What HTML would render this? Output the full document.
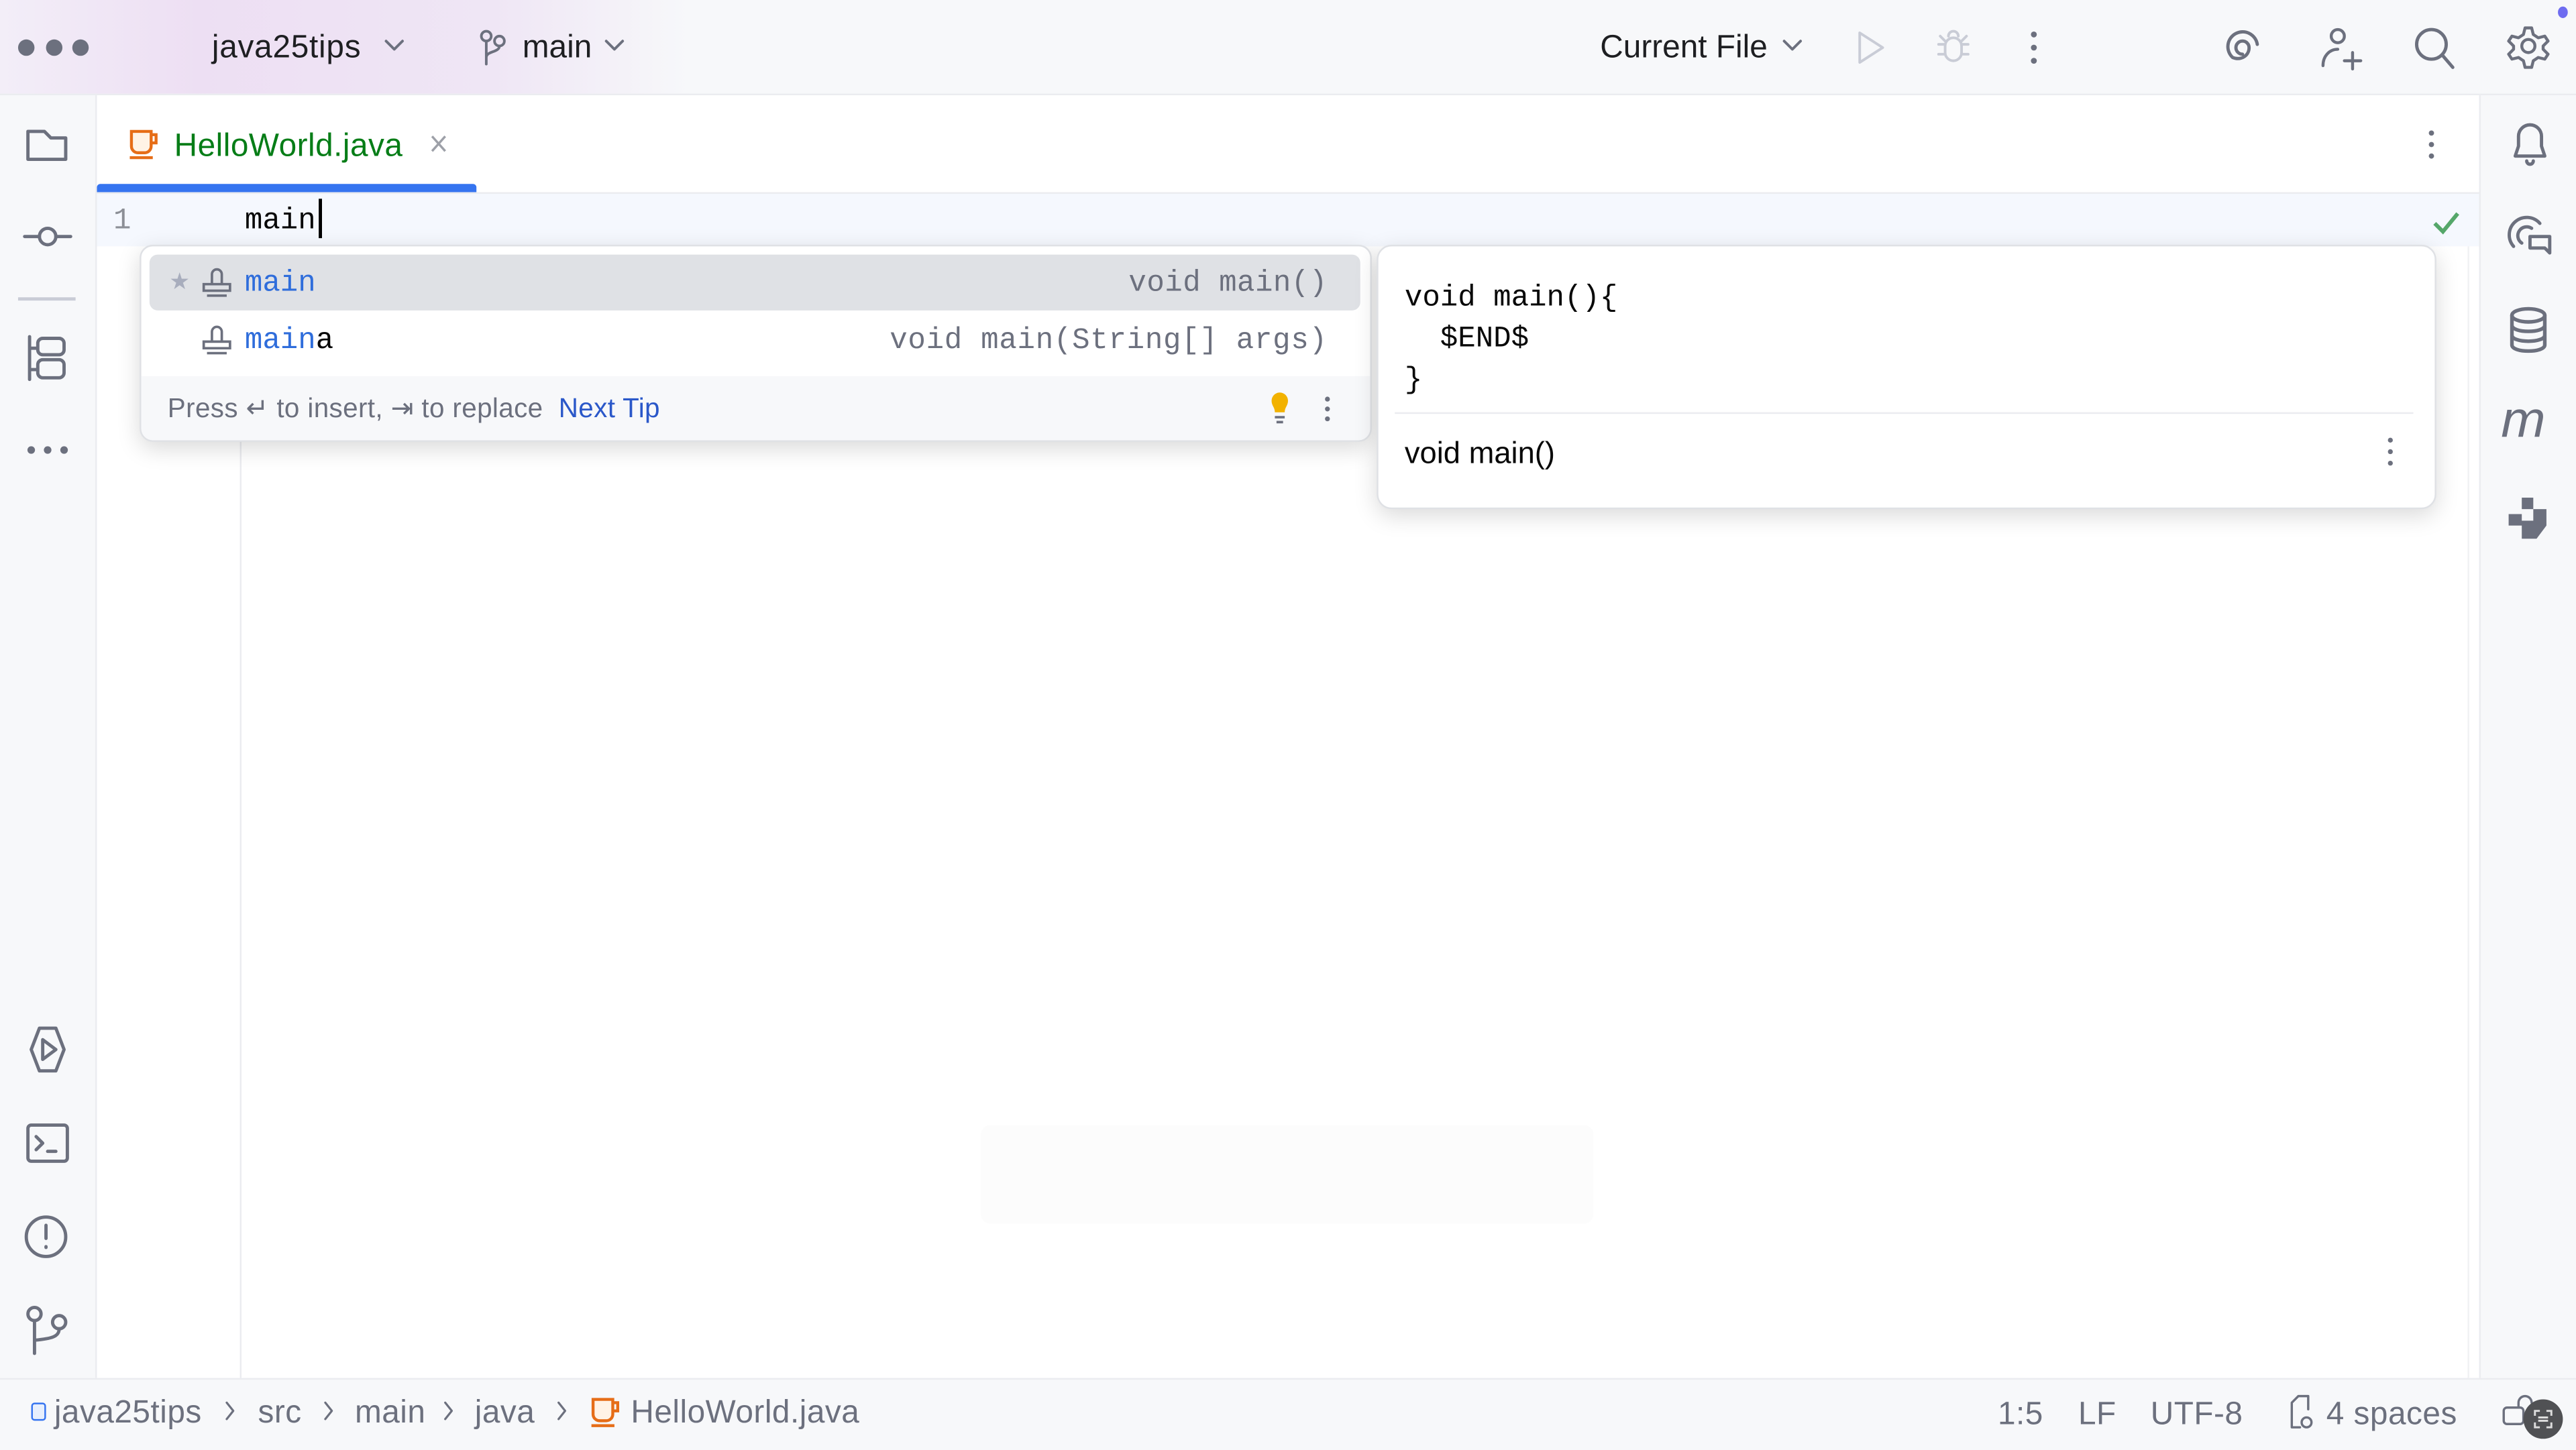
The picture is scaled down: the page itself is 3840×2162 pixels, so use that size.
<!DOCTYPE html>
<html><head><meta charset="utf-8">
<style>
html,body{margin:0;padding:0;width:3840px;height:2160px;overflow:hidden;background:#fff}
#s{position:absolute;left:0;top:0;width:1568px;height:882px;transform:scale(2.44898);transform-origin:0 0;font-family:"Liberation Sans",sans-serif;color:#1e1f22;background:#fff}
.a{position:absolute}
.m{font-family:"Liberation Mono","DejaVu Sans Mono",monospace}
svg{position:absolute;overflow:visible}
.ic{fill:none;stroke:#6c707e;stroke-width:1.6;stroke-linecap:round;stroke-linejoin:round}
.sb{font-size:19.5px;color:#6c707e;top:849px;letter-spacing:0.2px}
.ch{position:absolute;top:853px}
</style></head><body><div id="s">
<!-- top bar -->
<div class="a" style="left:0;top:0;width:1568px;height:57px;background:linear-gradient(90deg,#f3eef8 0px,#eddff3 120px,#efe6f5 300px,#f7f8fa 420px);border-bottom:1px solid #ebecf0"></div>
<div class="a" style="left:11px;top:24px;width:10px;height:10px;border-radius:50%;background:#6c707e"></div>
<div class="a" style="left:28px;top:24px;width:10px;height:10px;border-radius:50%;background:#6c707e"></div>
<div class="a" style="left:44px;top:24px;width:10px;height:10px;border-radius:50%;background:#6c707e"></div>
<div class="a" style="left:129px;top:18px;font-size:19.5px;letter-spacing:0.3px">java25tips</div>
<svg style="left:234px;top:24px" width="12" height="8"><path class="ic" d="M1 1l5 5 5-5"/></svg>
<svg style="left:292px;top:18px" width="16" height="22"><circle class="ic" cx="4" cy="4" r="3"/><circle class="ic" cx="12" cy="7" r="3"/><path class="ic" d="M4 7v14M12 10c0 4-8 3-8 7"/></svg>
<div class="a" style="left:318px;top:18px;font-size:19.5px">main</div>
<svg style="left:368px;top:24px" width="12" height="8"><path class="ic" d="M1 1l5 5 5-5"/></svg>
<div class="a" style="left:974px;top:18px;font-size:19.5px">Current File</div>
<svg style="left:1085px;top:24px" width="12" height="8"><path class="ic" d="M1 1l5 5 5-5"/></svg>
<svg style="left:1130px;top:18px" width="20" height="22"><path class="ic" style="stroke:#c9ccd6" d="M2 2l14 9-14 9z"/></svg>
<svg style="left:1178px;top:17px" width="22" height="24"><g class="ic" style="stroke:#c9ccd6"><rect x="6" y="6" width="10" height="14" rx="5"/><path d="M8 5a3 3 0 016 0M2 10h4M16 10h4M2 16h4M16 16h4M3 5l3 3M19 5l-3 3"/></g></svg>
<svg style="left:1234px;top:18px" width="8" height="22"><circle cx="4" cy="3" r="1.8" fill="#6c707e"/><circle cx="4" cy="11" r="1.8" fill="#6c707e"/><circle cx="4" cy="19" r="1.8" fill="#6c707e"/></svg>
<svg style="left:1352px;top:16px" width="26" height="26"><path class="ic" style="stroke-width:2" d="M13 17a4 4 0 110-8 4 4 0 014 4c0 5-5 8-10 6A9 9 0 1122 11"/></svg>
<svg style="left:1411px;top:15px" width="28" height="28"><g class="ic" style="stroke-width:1.8"><circle cx="12" cy="7" r="4"/><path d="M3 25c0-6 4-10 9-10M21 17v10M16 22h10"/></g></svg>
<svg style="left:1469px;top:16px" width="26" height="26"><g class="ic" style="stroke-width:2"><circle cx="11" cy="11" r="9"/><path d="M18 18l6 7"/></g></svg>
<svg style="left:1526px;top:15px" width="28" height="28"><g class="ic" style="stroke-width:1.8"><circle cx="13" cy="13" r="4"/><path d="M11 2h4l1 4 3 2 4-1 2 3-3 3v2l3 3-2 3-4-1-3 2-1 4h-4l-1-4-3-2-4 1-2-3 3-3v-2L1 10l2-3 4 1 3-2z"/></g></svg>
<div class="a" style="left:1557px;top:4px;width:6px;height:7px;border-radius:50%;background:#6e6cf0"></div>

<!-- left toolbar -->
<div class="a" style="left:0;top:58px;width:58px;height:781px;background:#f7f8fa;border-right:1px solid #ebecf0"></div>
<svg style="left:15px;top:77px" width="28" height="24"><path class="ic" d="M2 3h10l4 4h9v13H2z" style="stroke-width:2"/></svg>
<svg style="left:13px;top:134px" width="32" height="20"><g class="ic" style="stroke-width:2"><circle cx="16" cy="10" r="5"/><path d="M2 10h9M21 10h9"/></g></svg>
<div class="a" style="left:11px;top:181px;width:35px;height:2px;background:#c9ccd6"></div>
<svg style="left:15px;top:203px" width="28" height="30"><g class="ic" style="stroke-width:2"><path d="M3 2v26M3 9h4M3 22h4"/><rect x="8" y="3" width="16" height="10" rx="3"/><rect x="8" y="16" width="16" height="11" rx="3"/></g></svg>
<svg style="left:15px;top:270px" width="28" height="8"><circle cx="4" cy="4" r="2.3" fill="#6c707e"/><circle cx="14" cy="4" r="2.3" fill="#6c707e"/><circle cx="24" cy="4" r="2.3" fill="#6c707e"/></svg>
<svg style="left:14px;top:624px" width="30" height="30"><g class="ic" style="stroke-width:2"><path d="M10 2h10l5 13-5 13H10L5 15z"/><path d="M12 9v12l8-6z"/></g></svg>
<svg style="left:15px;top:683px" width="28" height="26"><g class="ic" style="stroke-width:2"><rect x="2" y="2" width="24" height="22" rx="2"/><path d="M7 9l4 4-4 4M14 18h5"/></g></svg>
<svg style="left:13px;top:738px" width="30" height="30"><g class="ic" style="stroke-width:2"><circle cx="15" cy="15" r="12"/><path d="M15 8v8M15 21v.5"/></g></svg>
<svg style="left:15px;top:794px" width="28" height="32"><g class="ic" style="stroke-width:2"><circle cx="6" cy="6" r="4"/><circle cx="21" cy="11" r="4"/><path d="M6 10v20M21 15c0 5-5 6-15 7"/></g></svg>

<!-- right toolbar -->
<div class="a" style="left:1509px;top:58px;width:59px;height:781px;background:#f7f8fa;border-left:1px solid #ebecf0"></div>
<svg style="left:1526px;top:73px" width="28" height="30"><g class="ic" style="stroke-width:2"><path d="M5 22l2-6V10a7 7 0 0114 0v6l2 6z"/><path d="M12 25a2 2 0 004 0"/></g></svg>
<svg style="left:1525px;top:130px" width="32" height="30"><g class="ic" style="stroke-width:2"><path d="M5 20A10 10 0 1121 6"/><path d="M10 18a5 5 0 016-9"/><path d="M15 14h12v10l-3-3h-9z"/></g></svg>
<svg style="left:1526px;top:186px" width="28" height="30"><g class="ic" style="stroke-width:2.2"><ellipse cx="13" cy="6" rx="10" ry="4"/><path d="M3 6v18c0 5 20 5 20 0V6M3 12c0 5 20 5 20 0M3 18c0 5 20 5 20 0"/></g></svg>
<div class="a" style="left:1523px;top:238px;font-size:31px;font-style:italic;color:#6c707e;font-family:'Liberation Sans',sans-serif;transform:scaleX(1.05)">m</div>
<svg style="left:1525px;top:301px" width="28" height="28"><path fill="#6c707e" d="M10 2h7v7h8v10l-6 8h-9v-8H2v-7h8z M10 9v7h7V9z"/></svg>

<!-- tab bar -->
<div class="a" style="left:59px;top:58px;width:1450px;height:59px;background:#fff;border-bottom:1px solid #ebecf0"></div>
<svg style="left:78px;top:78px" width="20" height="20"><g fill="none" stroke="#e66d17" stroke-width="1.8"><path d="M2 2h12v9a4 4 0 01-4 4H6a4 4 0 01-4-4z" fill="#fff3e6"/><path d="M14 4h3v5h-3"/><path d="M1 18h14"/></g></svg>
<div class="a" style="left:106px;top:78px;font-size:19.5px;color:#067d17;letter-spacing:0.2px">HelloWorld.java</div>
<svg style="left:262px;top:82px" width="10" height="11"><path d="M1 1l8 9M9 1l-8 9" stroke="#9da0a8" stroke-width="1.4"/></svg>
<div class="a" style="left:59px;top:112px;width:231px;height:5px;background:#3574f0;border-radius:2px 2px 0 0"></div>
<svg style="left:1476px;top:78px" width="8" height="20"><circle cx="4" cy="3" r="1.6" fill="#6c707e"/><circle cx="4" cy="10" r="1.6" fill="#6c707e"/><circle cx="4" cy="17" r="1.6" fill="#6c707e"/></svg>

<!-- editor -->
<div class="a" style="left:59px;top:118px;width:1450px;height:32px;background:#f5f8fe"></div>
<div class="a" style="left:146px;top:150px;width:1px;height:689px;background:#ebecf0"></div>
<div class="a" style="left:1502px;top:150px;width:1px;height:689px;background:#f0f1f3"></div>
<div class="a m" style="left:69px;top:125px;font-size:18px;color:#8c8f96">1</div>
<div class="a m" style="left:149px;top:125px;font-size:18px;color:#080808">main</div>
<div class="a" style="left:194px;top:121px;width:2px;height:24px;background:#000"></div>
<svg style="left:1480px;top:128px" width="18" height="16"><path d="M2 8l5 5 9-11" fill="none" stroke="#55a76a" stroke-width="2.4"/></svg>

<!-- completion popup -->
<div class="a" style="left:85px;top:149px;width:748px;height:118px;background:#fff;border:1px solid #dfe1e5;border-radius:8px;box-shadow:0 4px 14px rgba(0,0,0,.15);overflow:hidden">
 <div class="a" style="left:5px;top:5px;width:737px;height:34px;background:#dfe1e5;border-radius:5px"></div>
 <div class="a" style="left:17px;top:13px;font-size:14px;color:#a8adbd">★</div>
 <svg style="left:36px;top:12px" width="20" height="22"><g fill="none" stroke="#6c707e" stroke-width="1.5"><path d="M7 11V5a3 3 0 016 0v6M2 11h16v4H2zM4 18h12"/></g></svg>
 <div class="a m" style="left:63px;top:13px;font-size:18px;color:#2f6ddb">main</div>
 <div class="a m" style="right:26px;top:13px;font-size:18px;color:#6c707e;letter-spacing:0.2px">void main()</div>
 <svg style="left:36px;top:47px" width="20" height="22"><g fill="none" stroke="#6c707e" stroke-width="1.5"><path d="M7 11V5a3 3 0 016 0v6M2 11h16v4H2zM4 18h12"/></g></svg>
 <div class="a m" style="left:63px;top:48px;font-size:18px;color:#2f6ddb">main<span style="color:#080808">a</span></div>
 <div class="a m" style="right:26px;top:48px;font-size:18px;color:#6c707e;letter-spacing:0.3px">void main(String[] args)</div>
 <div class="a" style="left:0;top:79px;width:748px;height:39px;background:#f7f8fa"></div>
 <div class="a" style="left:16px;top:89px;font-size:16.5px;color:#6c707e;letter-spacing:0.15px">Press ↵ to insert, ⇥ to replace&nbsp;&nbsp;<span style="color:#2b58c9">Next Tip</span></div>
 <svg style="left:687px;top:88px" width="12" height="22"><path d="M6 1a5 5 0 00-5 5c0 3 2 4 2 7h6c0-3 2-4 2-7a5 5 0 00-5-5z" fill="#f2b200"/><path d="M3 16h6M4 19h4" stroke="#6c707e" stroke-width="1.5"/></svg>
 <svg style="left:718px;top:90px" width="8" height="20"><circle cx="4" cy="3" r="1.5" fill="#6c707e"/><circle cx="4" cy="9" r="1.5" fill="#6c707e"/><circle cx="4" cy="15" r="1.5" fill="#6c707e"/></svg>
</div>

<!-- doc popup -->
<div class="a" style="left:838px;top:149px;width:643px;height:159px;background:#fff;border:1px solid #dfe1e5;border-radius:9px;box-shadow:0 4px 14px rgba(0,0,0,.15)">
 <div class="a m" style="left:16px;top:20px;font-size:18px;line-height:25px;color:#080808;white-space:pre">void main(){
  $END$
}</div>
 <div class="a" style="left:10px;top:101px;width:620px;height:1px;background:#ebecf0"></div>
 <div class="a" style="left:16px;top:115px;font-size:18.5px;color:#080808">void main()</div>
 <svg style="left:612px;top:115px" width="8" height="20"><circle cx="4" cy="3" r="1.5" fill="#6c707e"/><circle cx="4" cy="10" r="1.5" fill="#6c707e"/><circle cx="4" cy="17" r="1.5" fill="#6c707e"/></svg>
</div>

<!-- faint video controls -->
<div class="a" style="left:597px;top:685px;width:373px;height:60px;background:#fcfcfc;border-radius:6px"></div>

<!-- status bar -->
<div class="a" style="left:0;top:839px;width:1568px;height:43px;background:#f7f8fa;border-top:1px solid #ebecf0"></div>
<div class="a" style="left:19px;top:854px;width:9px;height:11px;border:1.5px solid #3574f0;border-radius:2px;background:#e7effd;box-sizing:border-box"></div>
<div class="a sb" style="left:33px">java25tips</div>
<svg class="ch" style="left:137px" width="6" height="12"><path class="ic" style="stroke-width:1.3" d="M1 1l4 5-4 5"/></svg>
<div class="a sb" style="left:157px">src</div>
<svg class="ch" style="left:197px" width="6" height="12"><path class="ic" style="stroke-width:1.3" d="M1 1l4 5-4 5"/></svg>
<div class="a sb" style="left:216px">main</div>
<svg class="ch" style="left:270px" width="6" height="12"><path class="ic" style="stroke-width:1.3" d="M1 1l4 5-4 5"/></svg>
<div class="a sb" style="left:289px">java</div>
<svg class="ch" style="left:339px" width="6" height="12"><path class="ic" style="stroke-width:1.3" d="M1 1l4 5-4 5"/></svg>
<svg style="left:359px;top:850px" width="20" height="20"><g fill="none" stroke="#e66d17" stroke-width="1.8"><path d="M2 2h12v9a4 4 0 01-4 4H6a4 4 0 01-4-4z" fill="#fff3e6"/><path d="M14 4h3v5h-3"/><path d="M1 18h14"/></g></svg>
<div class="a sb" style="left:384px">HelloWorld.java</div>
<div class="a sb" style="left:1216px;top:850px">1:5</div>
<div class="a sb" style="left:1265px;top:850px">LF</div>
<div class="a sb" style="left:1309px;top:850px">UTF-8</div>
<svg style="left:1392px;top:849px" width="22" height="24"><g class="ic" style="stroke-width:1.4"><path d="M8 20H3V5l4-4h6v8"/><circle cx="12" cy="17" r="3"/></g></svg>
<div class="a sb" style="left:1416px;top:850px">4 spaces</div>
<svg style="left:1523px;top:850px" width="20" height="20"><g class="ic" style="stroke-width:1.4"><rect x="1" y="7" width="12" height="10" rx="2"/><path d="M10 7V4a4 4 0 018 0"/></g></svg>
<div class="a" style="left:1536px;top:852px;width:24px;height:24px;border-radius:50%;background:#505154"></div>
<svg style="left:1542px;top:858px" width="12" height="12"><g fill="none" stroke="#ddd" stroke-width="1.2"><path d="M1 4V1h3M8 1h3v3M11 8v3H8M4 11H1V8M3 5h6M3 7h6"/></g></svg>
</div></body></html>
